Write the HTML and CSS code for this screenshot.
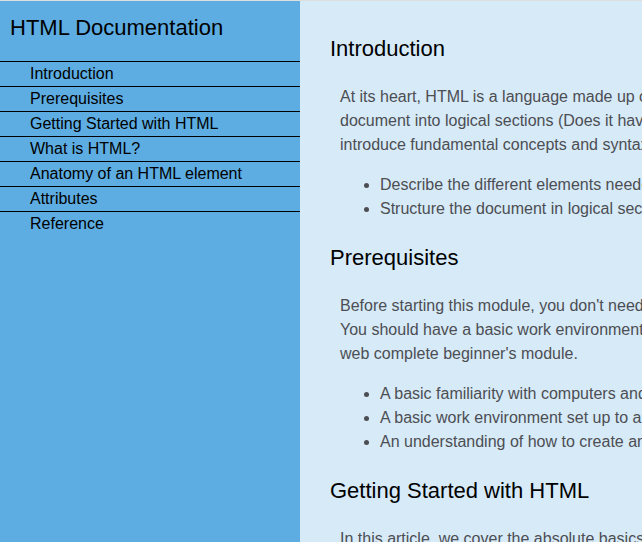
FILE: index.html
```html
<!DOCTYPE html>
<html lang="en">
<head>
<meta charset="utf-8">
<title>HTML Documentation</title>
<meta name="viewport" content="width=device-width, initial-scale=1">
<link rel="stylesheet" href="styles.css">
</head>
<body>
<nav class="sidebar">
  <h1 class="heading">HTML Documentation</h1>
  <ul class="menu">
    <li><a href="#introduction">Introduction</a></li>
    <li><a href="#prerequisites">Prerequisites</a></li>
    <li><a href="#getting-started">Getting Started with HTML</a></li>
    <li><a href="#what-is-html">What is HTML?</a></li>
    <li><a href="#anatomy">Anatomy of an HTML element</a></li>
    <li><a href="#attributes">Attributes</a></li>
    <li><a href="#reference">Reference</a></li>
  </ul>
</nav>
<main class="content">
  <section id="introduction">
    <h2 class="heading">Introduction</h2>
    <p>At its heart, HTML is a language made up of<br>document into logical sections (Does it have<br>introduce fundamental concepts and syntax</p>
    <ul>
      <li>Describe the different elements needed</li>
      <li>Structure the document in logical sections</li>
    </ul>
  </section>
  <section id="prerequisites">
    <h2 class="heading">Prerequisites</h2>
    <p>Before starting this module, you don't need<br>You should have a basic work environment<br>web complete beginner's module.</p>
    <ul>
      <li>A basic familiarity with computers and</li>
      <li>A basic work environment set up to a</li>
      <li>An understanding of how to create and</li>
    </ul>
  </section>
  <section id="getting-started">
    <h2 class="heading">Getting Started with HTML</h2>
    <p>In this article, we cover the absolute basics</p>
  </section>
</main>
</body>
</html>
```
FILE: styles.css
```css
* {
  box-sizing: border-box;
}

body {
  display: flex;
  height: 100vh;
  margin: 0;
  overflow: hidden;
  border-top: 1px solid #dcdfdd;
  background: #d6eaf8;
  color: #000;
  font: 16px/24px "Liberation Sans", Arial, sans-serif;
}

.heading {
  margin: 0;
  font-size: 22px;
  font-weight: normal;
  line-height: 25px;
}

.sidebar {
  flex: 0 0 300px;
  background: #5dade2;
}

.sidebar .heading {
  padding: 14px 10px 21px;
}

.menu {
  margin: 0;
  padding: 0;
  list-style: none;
}

.menu li {
  border-top: 1px solid #000;
}

.menu a {
  display: block;
  padding-left: 30px;
  color: #000;
  text-decoration: none;
}

.content {
  flex: 1;
  min-width: 0;
  padding: 11px 0 0 30px;
  overflow: hidden;
  white-space: nowrap;
}

.content .heading {
  padding: 24px 0;
}

.content p {
  margin: 0 10px;
  color: #4d4e53;
}

.content ul {
  margin: 16px 0 0;
  padding-left: 50px;
  color: #4d4e53;
}
```
